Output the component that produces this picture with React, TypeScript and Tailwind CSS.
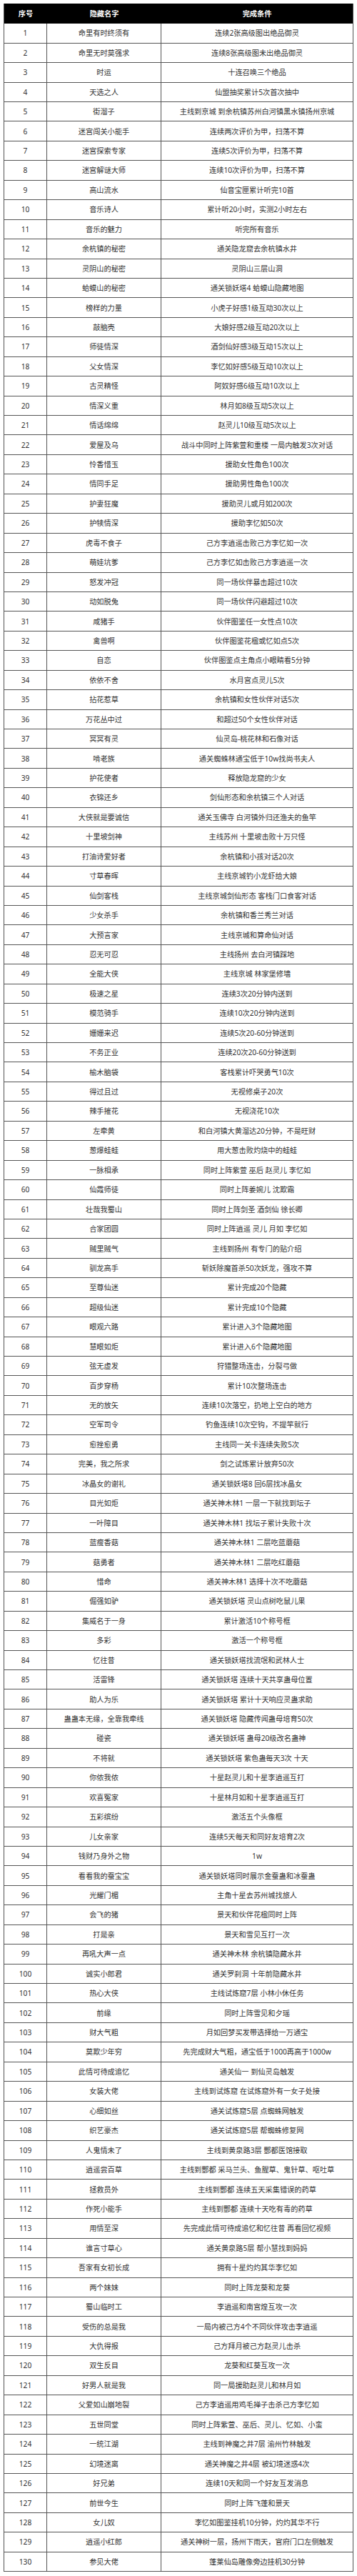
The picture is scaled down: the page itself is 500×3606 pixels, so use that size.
const rows: [string, string][] = [
  ["命里有时终须有", "连续2张高级图出绝品御灵"],
  ["命里无时莫强求", "连续8张高级图未出绝品御灵"],
  ["时运", "十连召唤三个绝品"],
  ["天选之人", "仙盟抽奖累计5次首次抽中"],
  ["街溜子", "主线到京城 到余杭镇苏州白河镇黑水镇扬州京城"],
  ["迷宫闯关小能手", "连续两次评价为甲，扫荡不算"],
  ["迷宫探索专家", "连续5次评价为甲，扫荡不算"],
  ["迷宫解谜大师", "连续10次评价为甲，扫荡不算"],
  ["高山流水", "仙音宝匣累计听完10首"],
  ["音乐诗人", "累计听20小时，实测2小时左右"],
  ["音乐的魅力", "听完所有音乐"],
  ["余杭镇的秘密", "通关隐龙窟去余杭镇水井"],
  ["灵阴山的秘密", "灵阴山三层山洞"],
  ["蛤蟆山的秘密", "通关锁妖塔4 蛤蟆山隐藏地图"],
  ["榜样的力量", "小虎子好感1级互动30次以上"],
  ["敲脑壳", "大娘好感2级互动20次以上"],
  ["师徒情深", "酒剑仙好感3级互动15次以上"],
  ["父女情深", "李忆如好感5级互动10次以上"],
  ["古灵精怪", "阿奴好感6级互动10次以上"],
  ["情深义重", "林月如8级互动5次以上"],
  ["情话绵绵", "赵灵儿10级互动5次以上"],
  ["爱屋及乌", "战斗中同时上阵紫萱和重楼 一局内触发3次对话"],
  ["怜香惜玉", "援助女性角色100次"],
  ["情同手足", "援助男性角色100次"],
  ["护妻狂魔", "援助灵儿或月如200次"],
  ["护犊情深", "援助李忆如50次"],
  ["虎毒不食子", "己方李逍遥击败己方李忆如一次"],
  ["萌娃坑爹", "己方李忆如击败己方李逍遥一次"],
  ["怒发冲冠", "同一场伙伴暴击超过10次"],
  ["动如脱兔", "同一场伙伴闪避超过10次"],
  ["咸猪手", "伙伴图鉴任一女性点10次"],
  ["禽兽啊", "伙伴图鉴花楹或忆如点5次"],
  ["自恋", "伙伴图鉴点主角点小眼睛看5分钟"],
  ["依依不舍", "水月宫点灵儿5次"],
  ["拈花惹草", "余杭镇和女性伙伴对话5次"],
  ["万花丛中过", "和超过50个女性伙伴对话"],
  ["冥冥有灵", "仙灵岛-桃花林和石像对话"],
  ["啃老族", "通关蜘蛛林通宝低于10w找尚书夫人"],
  ["护花使者", "释放隐龙窟的少女"],
  ["衣锦还乡", "剑仙形态和余杭镇三个人对话"],
  ["大侠就是要诚信", "通关玉佛寺 白河镇外归还渔夫的鱼竿"],
  ["十里坡剑神", "主线苏州 十里坡击败十万只怪"],
  ["打油诗爱好者", "余杭镇和小孩对话20次"],
  ["寸草春晖", "主线京城钓小龙虾给大娘"],
  ["仙剑客栈", "主线京城剑仙形态 客栈门口食客对话"],
  ["少女杀手", "余杭镇和香兰秀兰对话"],
  ["大预言家", "主线京城和算命仙对话"],
  ["忍无可忍", "主线扬州 去白河镇踩地"],
  ["全能大侠", "主线京城 林家堡修墙"],
  ["极速之星", "连续3次20分钟内送到"],
  ["模范骑手", "连续10次20分钟内送到"],
  ["姗姗来迟", "连续5次20-60分钟送到"],
  ["不务正业", "连续20次20-60分钟送到"],
  ["榆木脑袋", "客栈累计吓哭勇气10次"],
  ["得过且过", "无视修桌子20次"],
  ["辣手摧花", "无视浇花10次"],
  ["左牵黄", "和白河镇大黄溜达20分钟，不是旺财"],
  ["葱爆蛙蛙", "用大葱击败灼烧中的蛙蛙"],
  ["一脉相承", "同时上阵紫萱 巫后 赵灵儿 李忆如"],
  ["仙霞师徒", "同时上阵姜婉儿 沈欺霜"],
  ["壮哉我蜀山", "同时上阵剑圣 酒剑仙 徐长卿"],
  ["合家团圆", "同时上阵逍遥 灵儿 月如 李忆如"],
  ["贼里贼气", "主线到扬州 有专门的贴介绍"],
  ["驯龙高手", "斩妖除魔首杀50次妖龙，强攻不算"],
  ["至尊仙迷", "累计完成20个隐藏"],
  ["超级仙迷", "累计完成10个隐藏"],
  ["眼观六路", "累计进入3个隐藏地图"],
  ["慧眼如炬", "累计进入6个隐藏地图"],
  ["弦无虚发", "狩猎整场连击，分裂弓做"],
  ["百步穿杨", "累计10次整场连击"],
  ["无的放矢", "连续10次落空，扔地上空白的地方"],
  ["空军司令", "钓鱼连续10次空钩，不提竿就行"],
  ["愈挫愈勇", "主线同一关卡连续失败5次"],
  ["完美，我之所求", "剑之试炼累计放弃50次"],
  ["冰晶女的谢礼", "通关锁妖塔8 回6层找冰晶女"],
  ["目光如炬", "通关神木林1 一层一下就找到坛子"],
  ["一叶障目", "通关神木林1 找坛子累计失败十次"],
  ["蓝瘦香菇", "通关神木林1 二层吃蓝蘑菇"],
  ["菇勇者", "通关神木林1 二层吃红蘑菇"],
  ["惜命", "通关神木林1 选择十次不吃蘑菇"],
  ["倔强如驴", "通关锁妖塔 灵山点树吃鼠儿果"],
  ["集威名于一身", "累计激活10个称号框"],
  ["多彩", "激活一个称号框"],
  ["忆往昔", "通关锁妖塔找流氓和武林人士"],
  ["活雷锋", "通关锁妖塔 连续十天共享蛊母位置"],
  ["助人为乐", "通关锁妖塔 累计十天响应灵蛊求助"],
  ["蛊蛊本无缘，全靠我牵线", "通关锁妖塔 隐藏传闻蛊母培育50次"],
  ["碰瓷", "通关锁妖塔 蛊母20级改名蛊神"],
  ["不将就", "通关锁妖塔 紫色蛊每天3次 十天"],
  ["你侬我侬", "十星赵灵儿和十星李逍遥互打"],
  ["欢喜冤家", "十星林月如和十星李逍遥互打"],
  ["五彩缤纷", "激活五个头像框"],
  ["儿女亲家", "连续5天每天和同好友培育2次"],
  ["钱财乃身外之物", "1w"],
  ["看看我的蚕宝宝", "通关锁妖塔同时展示金蚕蛊和冰蚕蛊"],
  ["光耀门楣", "主角十星去苏州城找旅人"],
  ["会飞的猪", "景天和伙伴花楹同时上阵"],
  ["打是亲", "景天和雪见互打一次"],
  ["再吼大声一点", "通关神木林 余杭镇隐藏水井"],
  ["诚实小郎君", "通关罗刹洞 十年前隐藏水井"],
  ["热心大侠", "主线试炼窟7层 小林小休任务"],
  ["前缘", "同时上阵雪见和夕瑶"],
  ["财大气粗", "月如回梦买发带选择给一万通宝"],
  ["莫欺少年穷", "先完成财大气粗，通宝低于1000再高于1000w"],
  ["此情可待成追忆", "通关仙一 到仙灵岛触发"],
  ["女装大佬", "主线到试炼窟 在试炼窟外有一女子处接"],
  ["心细如丝", "通关试炼窟5层 点蜘蛛网触发"],
  ["织艺豪杰", "通关试炼窟5层 帮蜘蛛修复网"],
  ["人鬼情未了", "主线到黄泉路3层 酆都医馆接取"],
  ["逍遥尝百草", "主线到酆都 采马兰头、鱼腥草、鬼针草、呕吐草"],
  ["拯救员外", "主线到酆都 连续五天采集错误的药草"],
  ["作死小能手", "主线到酆都 连续十天吃有毒的药草"],
  ["用情至深", "先完成此情可待成追忆和忆往昔 再看回忆视频"],
  ["谁言寸草心", "通关黄泉路5层 帮小慧找到妈妈"],
  ["吾家有女初长成", "拥有十星灼灼其华李忆如"],
  ["两个妹妹", "同时上阵龙葵和龙葵"],
  ["蜀山临时工", "李逍遥和南宫煌互攻一次"],
  ["受伤的总是我", "一局内被己方4个不同伙伴攻击李逍遥"],
  ["大仇得报", "己方拜月被己方赵灵儿击杀"],
  ["双生反目", "龙葵和红葵互攻一次"],
  ["好男人就是我", "同一局援助赵灵儿和林月如"],
  ["父爱如山崩地裂", "己方李逍遥用鸡毛掸子击杀己方李忆如"],
  ["五世同堂", "同时上阵紫萱、巫后、灵儿、忆如、小蛮"],
  ["一统江湖", "主线到神魔之井7层 渝州竹林触发"],
  ["幻境迷离", "通关神魔之井4层 被幻境迷惑4次"],
  ["好兄弟", "连续10天和同一个好友互发消息"],
  ["前世今生", "同时上阵飞蓬和景天"],
  ["女儿奴", "李忆如图鉴挂机10分钟，灼灼其华不行"],
  ["逍遥小红郎", "通关神树一层，扬州下雨天，官府门口左侧触发"],
  ["参见大佬", "蓬莱仙岛雕像旁边挂机30分钟"],
];

export default function App() {
  return (
    <div className="w-[500px] bg-white px-[5px] pt-[5px] pb-[6px] font-['Noto_Sans','Noto_Sans_CJK_SC',sans-serif] text-[10.2px] leading-none">
      <div className="border-x border-[#555]">
        <div className="grid h-[28.3px] grid-cols-[60px_160px_1fr] bg-black font-bold text-white">
          <div className="flex items-center justify-center">序号</div>
          <div className="flex items-center justify-center">隐藏名字</div>
          <div className="flex items-center justify-center">完成条件</div>
        </div>
        {rows.map(([name, cond], i) => (
          <div
            key={i}
            className="grid h-[27.44px] grid-cols-[60px_160px_1fr] border-b border-[#555] text-[#333]"
          >
            <div className="flex items-center justify-center border-r border-[#555]">
              {i + 1}
            </div>
            <div className="flex items-center justify-center border-r border-[#555]">
              {name}
            </div>
            <div className="flex items-center justify-center whitespace-nowrap">
              {cond}
            </div>
          </div>
        ))}
      </div>
    </div>
  );
}
